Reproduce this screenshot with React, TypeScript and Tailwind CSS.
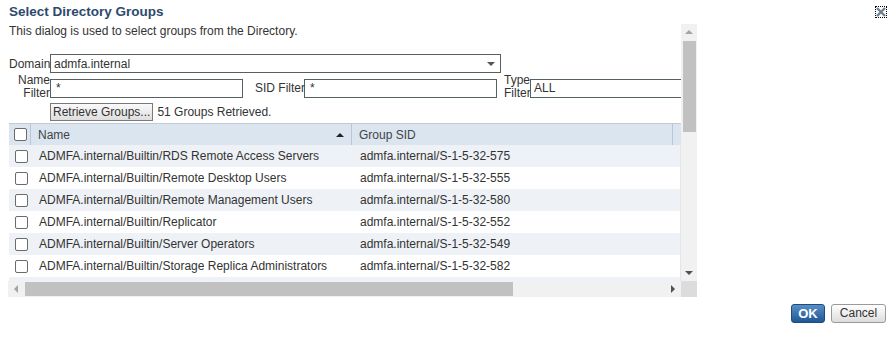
import React from "react";

const rows: [string, string][] = [
  ["ADMFA.internal/Builtin/RDS Remote Access Servers", "admfa.internal/S-1-5-32-575"],
  ["ADMFA.internal/Builtin/Remote Desktop Users", "admfa.internal/S-1-5-32-555"],
  ["ADMFA.internal/Builtin/Remote Management Users", "admfa.internal/S-1-5-32-580"],
  ["ADMFA.internal/Builtin/Replicator", "admfa.internal/S-1-5-32-552"],
  ["ADMFA.internal/Builtin/Server Operators", "admfa.internal/S-1-5-32-549"],
  ["ADMFA.internal/Builtin/Storage Replica Administrators", "admfa.internal/S-1-5-32-582"],
  ["", ""],
];

function Check() {
  return <div className="w-[13px] h-[13px] border border-[#6b6b6b] rounded-[2px] bg-white" />;
}

function Tri({ dir, color }: { dir: "up" | "down" | "left" | "right"; color: string }) {
  const pts = {
    up: "0,5 4,1 8,5",
    down: "0,1 8,1 4,5",
    left: "5,0 5,8 1,4",
    right: "1,0 1,8 5,4",
  }[dir];
  const vert = dir === "up" || dir === "down";
  return (
    <svg width={vert ? 8 : 6} height={vert ? 6 : 8} viewBox={vert ? "0 0 8 6" : "0 0 6 8"}>
      <polygon points={pts} fill={color} />
    </svg>
  );
}

export default function App() {
  return (
    <div className="w-[894px] h-[358px] bg-white relative font-['Liberation_Sans',Arial,sans-serif] text-[12px] text-[#333]">
      <div className="pl-[9px] pt-[4px] h-[20px] leading-[16px] text-[13.5px] font-bold text-[#2d4a6c]">
        Select Directory Groups
      </div>

      <div className="absolute top-[6px] right-[7px] w-[12px] h-[12px] border border-dotted border-black flex items-center justify-center">
        <svg width="10" height="10" viewBox="0 0 10 10">
          <path d="M1 1 L9 9 M9 1 L1 9" stroke="#6f8090" strokeWidth="2.4" />
        </svg>
      </div>

      <div className="ml-[8px] mt-[4px] w-[689px] h-[273px] grid grid-cols-[673px_16px] grid-rows-[257px_16px]">
        <div className="overflow-hidden">
          <div className="w-[883px] pl-[1px]">
            <div className="h-[14px] leading-[14px]">This dialog is used to select groups from the Directory.</div>

            <div className="mt-[16px] flex items-center h-[19px]">
              <div className="w-[41px] shrink-0 leading-[14px]">Domain</div>
              <div className="w-[451px] shrink-0 h-[19px] border border-[#55605f] flex items-center justify-between pl-[3px] pr-[5px] bg-white">
                <span>admfa.internal</span>
                <Tri dir="down" color="#555" />
              </div>
            </div>

            <div className="mt-[1px] h-[26px] flex items-start">
              <div className="w-[41px] shrink-0 text-right leading-[13px]">
                Name
                <br />
                Filter
              </div>
              <div className="mt-[5px] w-[193px] shrink-0 h-[19px] border border-[#55605f] pl-[5px] leading-[17px]">*</div>
              <div className="ml-[12px] mt-[5px] w-[49px] shrink-0 whitespace-nowrap leading-[19px]">SID Filter</div>
              <div className="mt-[5px] w-[193px] shrink-0 h-[19px] border border-[#55605f] pl-[5px] leading-[17px]">*</div>
              <div className="ml-[7px] w-[26px] shrink-0 leading-[13px]">
                Type
                <br />
                Filter
              </div>
              <div className="mt-[5px] w-[193px] shrink-0 h-[19px] border border-[#55605f] pl-[3px] leading-[17px]">ALL</div>
            </div>

            <div className="mt-[3px] h-[18px] flex items-center pl-[41px]">
              <div className="h-[18px] px-[2px] border border-[#7a7a7a] bg-gradient-to-b from-[#fafafa] to-[#dedede] leading-[16px]">
                Retrieve Groups...
              </div>
              <span className="ml-[4px]">51 Groups Retrieved.</span>
            </div>

            <div className="mt-[2px] h-[22px] flex items-stretch bg-[#dbe5f0] border-t border-[#c3cbd4] text-[#444]">
              <div className="w-[22px] shrink-0 flex items-center justify-center pl-[2px] border-r border-[#b9c5d2]">
                <Check />
              </div>
              <div className="w-[321px] shrink-0 flex items-center justify-between pl-[7px] pr-[7px] border-r border-[#b9c5d2]">
                <span>Name</span>
                <Tri dir="up" color="#222" />
              </div>
              <div className="w-[321px] shrink-0 flex items-center pl-[7px] border-r border-[#b9c5d2]">Group SID</div>
              <div className="flex-1" />
            </div>

            {rows.map(([name, sid], i) => (
              <div key={i} className={`h-[22px] flex items-center ${i % 2 === 0 ? "bg-[#eef1f5]" : "bg-white"}`}>
                <div className="w-[22px] shrink-0 flex items-center justify-center pl-[2px]">
                  {name && <Check />}
                </div>
                <div className="w-[322px] shrink-0 pl-[8px]">{name}</div>
                <div className="w-[328px] shrink-0 pl-[7px] h-[22px] leading-[22px] border-r border-[#e2e5e9]">{sid}</div>
                <div className="flex-1" />
              </div>
            ))}
          </div>
        </div>

        <div className="bg-[#f1f1f1] flex flex-col">
          <div className="h-[16px] flex items-center justify-center">
            <Tri dir="up" color="#a3a3a3" />
          </div>
          <div className="flex-1">
            <div className="mt-[1px] ml-[2px] w-[13px] h-[91px] bg-[#c1c1c1]" />
          </div>
          <div className="h-[16px] flex items-center justify-center">
            <Tri dir="down" color="#505050" />
          </div>
        </div>

        <div className="bg-[#f1f1f1] flex items-stretch">
          <div className="w-[16px] flex items-center justify-center">
            <Tri dir="left" color="#a3a3a3" />
          </div>
          <div className="flex-1 flex items-center">
            <div className="ml-[1px] w-[488px] h-[14px] bg-[#c1c1c1]" />
          </div>
          <div className="w-[16px] flex items-center justify-center">
            <Tri dir="right" color="#505050" />
          </div>
        </div>
        <div className="bg-[#dcdcdc]" />
      </div>

      <div className="mt-[7px] pr-[8px] flex justify-end gap-[6px]">
        <div className="w-[34px] h-[19px] rounded-[3px] border border-[#1c4d82] bg-gradient-to-b from-[#5a8fc5] to-[#1f5795] text-white font-bold text-[13px] leading-[17px] text-center">
          OK
        </div>
        <div className="w-[55px] h-[19px] rounded-[3px] border border-[#9a9a9a] bg-gradient-to-b from-[#ffffff] to-[#dcdcdc] text-[#333] text-[12px] leading-[17px] text-center">
          Cancel
        </div>
      </div>
    </div>
  );
}
